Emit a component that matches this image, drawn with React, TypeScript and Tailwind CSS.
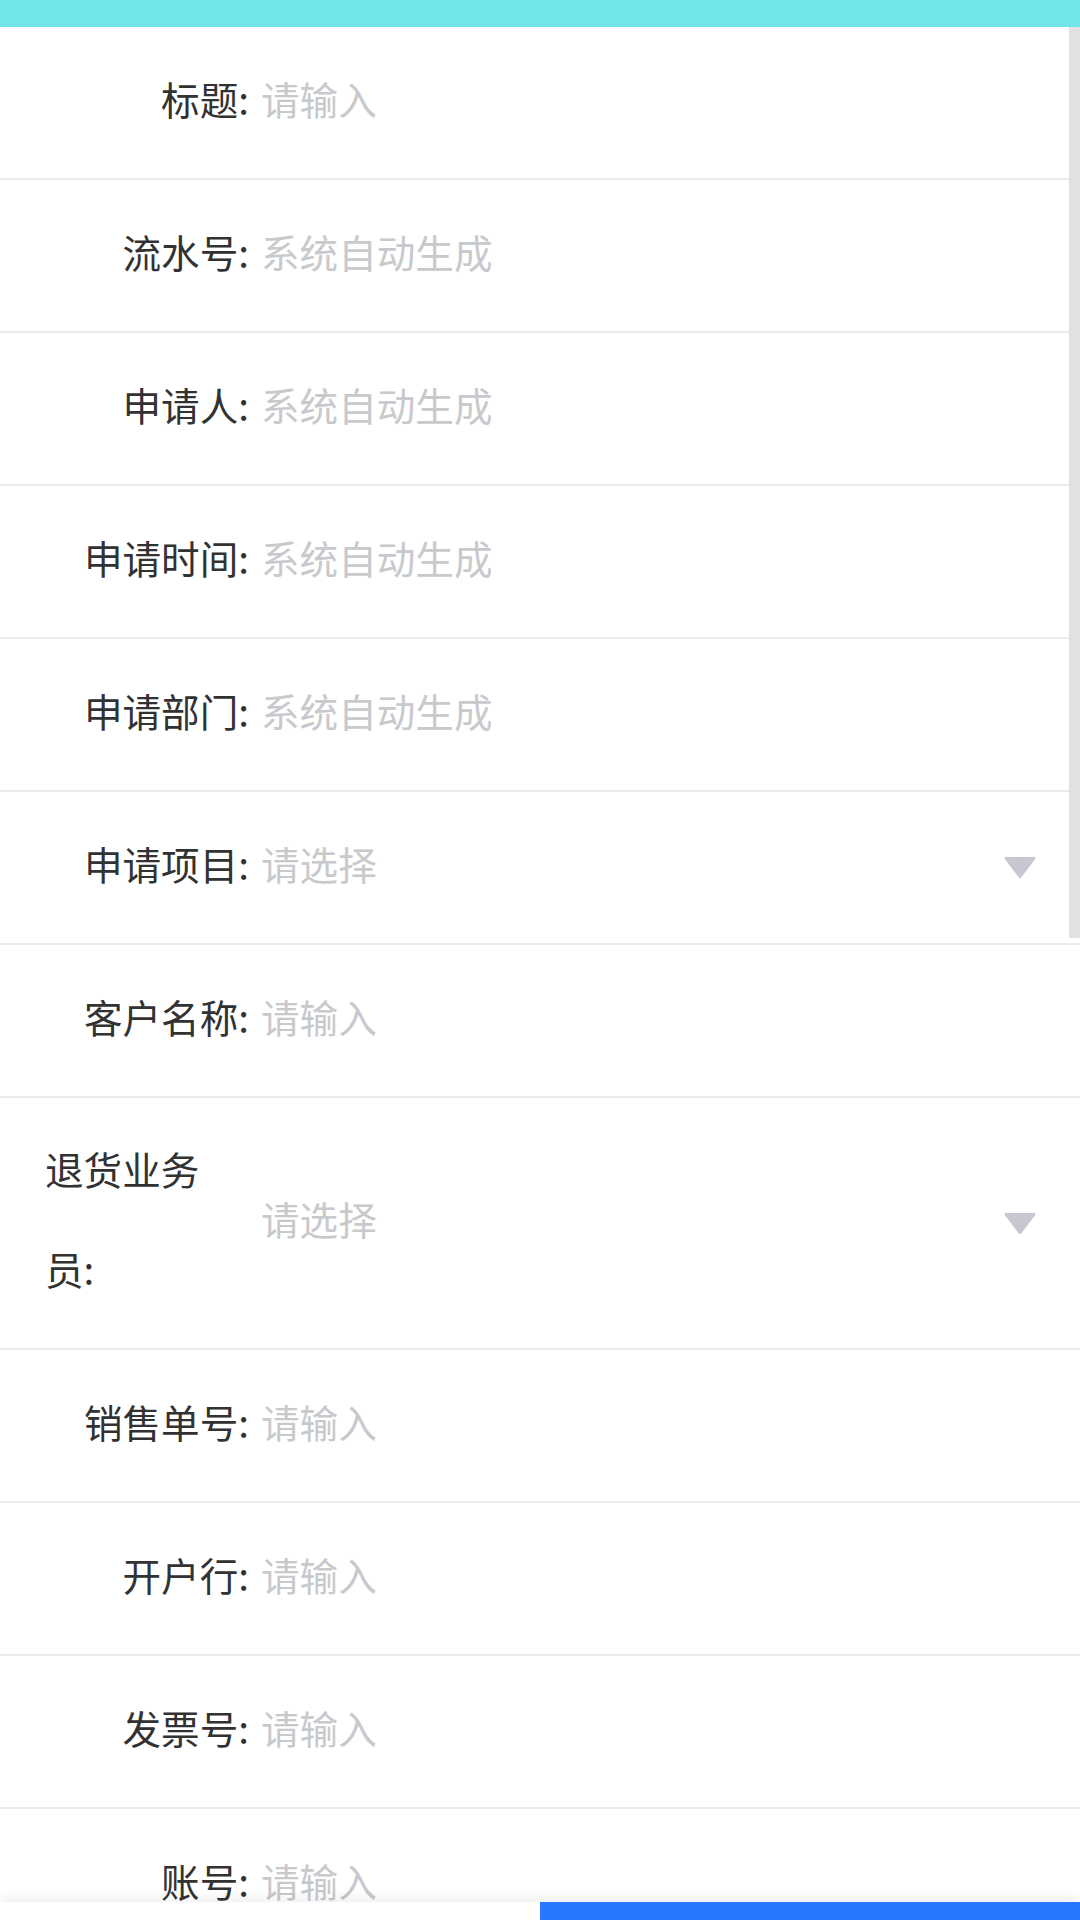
import React from 'react';

type Field = {
  label: React.ReactNode;
  placeholder: string;
  select?: boolean;
  tall?: boolean;
};

const fields: Field[] = [
  { label: '标题:', placeholder: '请输入' },
  { label: '流水号:', placeholder: '系统自动生成' },
  { label: '申请人:', placeholder: '系统自动生成' },
  { label: '申请时间:', placeholder: '系统自动生成' },
  { label: '申请部门:', placeholder: '系统自动生成' },
  { label: '申请项目:', placeholder: '请选择', select: true },
  { label: '客户名称:', placeholder: '请输入' },
  {
    label: (
      <>
        退货业务
        <br />
        员:
      </>
    ),
    placeholder: '请选择',
    select: true,
    tall: true,
  },
  { label: '销售单号:', placeholder: '请输入' },
  { label: '开户行:', placeholder: '请输入' },
  { label: '发票号:', placeholder: '请输入' },
  { label: '账号:', placeholder: '请输入' },
];

const Caret = () => (
  <svg width="34" height="23" viewBox="0 0 34 23" className="shrink-0 translate-y-[5px]">
    <path
      d="M3 1 H31 Q33.5 1 32 3.2 L18.6 21 Q17 23 15.4 21 L2 3.2 Q0.5 1 3 1 Z"
      fill="#c6c7d0"
    />
  </svg>
);

export default function App() {
  return (
    <div
      className="relative h-[1920px] w-[1080px] overflow-hidden bg-white text-[38.6px]"
      style={{ fontFamily: '"Noto Sans CJK SC", "Noto Sans", sans-serif' }}
    >
      <div className="h-[27px] bg-[#71e6ea]" />

      <div>
        {fields.map((f, i) => (
          <div
            key={i}
            className={
              'flex items-center border-b-2 border-[#ebebeb] pb-[10px] pl-[45px] pr-[43px] ' +
              (f.tall ? 'h-[252px]' : 'h-[153px]')
            }
          >
            <div
              className={
                'w-[204px] shrink-0 leading-[100px] text-[#323233] ' +
                (f.tall ? 'text-left' : 'text-right')
              }
            >
              {f.label}
            </div>
            <div className="ml-[12px] flex-1 leading-[100px] text-[#c8c9cc]">{f.placeholder}</div>
            {f.select && <Caret />}
          </div>
        ))}
      </div>

      {/* scrollbar thumb */}
      <div className="absolute right-0 top-[27px] h-[911px] w-[11px] bg-[#e1e1e1]" />

      {/* bottom action bar */}
      <div className="absolute left-0 top-[1902px] flex h-[100px] w-full shadow-[0_-6px_10px_rgba(0,0,0,0.05)]">
        <div className="flex-1 bg-white" />
        <div className="flex-1 bg-[#2878ff]" />
      </div>
    </div>
  );
}
